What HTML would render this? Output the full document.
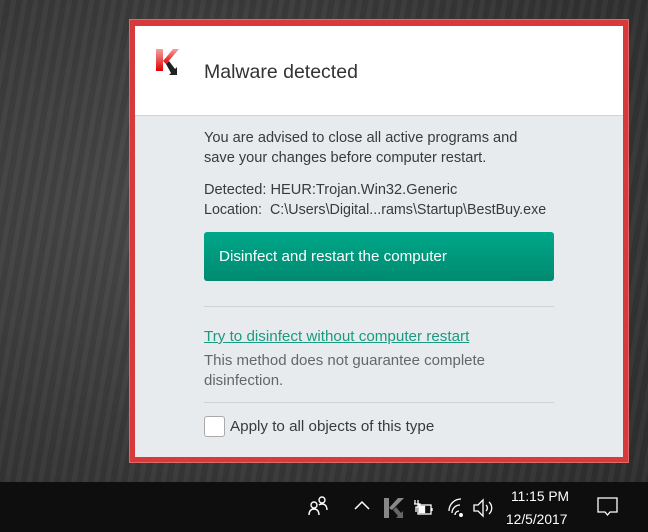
<!DOCTYPE html>
<html><head><style>
*{margin:0;padding:0;box-sizing:border-box}
body{width:648px;height:532px;overflow:hidden;position:relative;font-family:"Liberation Sans",sans-serif;
background:radial-gradient(ellipse at 30% 40%,#4a4a4a,#363636 60%,#2c2c2c);}
.t{position:absolute;white-space:nowrap;font-size:14.6px;color:#3a3a3a;line-height:20px}
</style></head><body>
<div style="position:absolute;left:0;top:0;width:648px;height:482px;background:repeating-linear-gradient(100deg,rgba(255,255,255,.03) 0 5px,rgba(0,0,0,.04) 5px 11px)"></div>
<div style="position:absolute;left:129px;top:19px;width:500px;height:444px;background:#d83a3c;border:1px solid #e06a6a"></div>
<div style="position:absolute;left:135px;top:26px;width:488px;height:89px;background:#fff"></div>
<div style="position:absolute;left:135px;top:115px;width:488px;height:342px;background:#e7ebee;border-top:1px solid #d0d4d8"></div>
<svg style="position:absolute;left:155px;top:47px" width="32" height="32" viewBox="0 0 32 32">
<defs><linearGradient id="r" x1="0" y1="0" x2="0" y2="1"><stop offset="0" stop-color="#f6a0a0"/><stop offset="1" stop-color="#e00000"/></linearGradient></defs>
<path d="M1 2h7v22H1z" fill="url(#r)"/><path d="M8 14L18 2h6L11 17z" fill="url(#r)"/><path d="M11 17l3-3 6 8 2-2v8h-8l2-2z" fill="#222"/></svg>
<div class="t" style="left:204px;top:60px;font-size:19.5px;color:#333;line-height:24px">Malware detected</div>
<div class="t" style="left:204px;top:128px">You are advised to close all active programs and</div>
<div class="t" style="left:204px;top:148px">save your changes before computer restart.</div>
<div class="t" style="left:204px;top:180px">Detected: HEUR:Trojan.Win32.Generic</div>
<div class="t" style="left:204px;top:200px;font-size:14.3px">Location:&nbsp; C:\Users\Digital...rams\Startup\BestBuy.exe</div>
<div style="position:absolute;left:204px;top:232px;width:350px;height:49px;border-radius:3px;background:linear-gradient(#00a78a,#008a70)"></div>
<div class="t" style="left:219px;top:247px;color:#fff;font-size:15.2px">Disinfect and restart the computer</div>
<div style="position:absolute;left:204px;top:306px;width:350px;height:1px;background:#cdd2d6"></div>
<div class="t" style="left:204px;top:327px;color:#1a9a80;text-decoration:underline;font-size:15.2px">Try to disinfect without computer restart</div>
<div class="t" style="left:204px;top:351px;color:#666;font-size:15px">This method does not guarantee complete</div>
<div class="t" style="left:204px;top:371px;color:#666;font-size:15px">disinfection.</div>
<div style="position:absolute;left:204px;top:402px;width:350px;height:1px;background:#cdd2d6"></div>
<div style="position:absolute;left:204px;top:416px;width:21px;height:21px;background:#fff;border:1px solid #aaa;border-radius:3px"></div>
<div class="t" style="left:230px;top:417px;font-size:15.2px">Apply to all objects of this type</div>
<div style="position:absolute;left:0;top:482px;width:648px;height:50px;background:#0e0e0e"></div>
<svg style="position:absolute;left:305px;top:495px" width="30" height="24" viewBox="0 0 30 24" fill="none" stroke="#fff" stroke-width="1.4">
<circle cx="9" cy="10" r="3"/><path d="M4 20c0-4 2-6 5-6s5 2 5 6"/><circle cx="17" cy="5" r="3"/><path d="M14 10c1-1 2-1 3-1 3 0 5 2 5 6"/></svg>
<svg style="position:absolute;left:352px;top:498px" width="20" height="14" viewBox="0 0 20 14" fill="none" stroke="#fff" stroke-width="1.5"><path d="M3 11l7-7 7 7"/></svg>
<svg style="position:absolute;left:383px;top:497px" width="22" height="22" viewBox="0 0 22 22"><path d="M1 1h5v20H1z" fill="#888"/><path d="M6 11L15 1h6L9 13z" fill="#888"/><path d="M10 13l3-3 5 6 2-2v7h-7l2-2z" fill="#666"/></svg>
<svg style="position:absolute;left:413px;top:498px" width="24" height="18" viewBox="0 0 24 18" fill="none" stroke="#fff" stroke-width="1.3"><path d="M2 2v4M5 2v4M1 6h6v3H3v5"/><rect x="5" y="7" width="13" height="9"/><rect x="6.5" y="8.5" width="5" height="6" fill="#fff"/><path d="M19 10v3"/></svg>
<svg style="position:absolute;left:446px;top:497px" width="22" height="22" viewBox="0 0 22 22" fill="none" stroke="#fff" stroke-width="1.3"><path d="M3 14a12 12 0 0 1 12-12M6 16a8 8 0 0 1 8-8M9 18a4 4 0 0 1 4-4"/><circle cx="15" cy="18" r="1.3" fill="#fff"/></svg>
<svg style="position:absolute;left:472px;top:497px" width="22" height="22" viewBox="0 0 22 22" fill="none" stroke="#fff" stroke-width="1.3"><path d="M2 8h4l5-5v16l-5-5H2z"/><path d="M14 8a4 4 0 0 1 0 6M17 5a8 8 0 0 1 0 12"/></svg>
<div class="t" style="left:511px;top:487px;color:#fff;font-size:13.8px">11:15 PM</div>
<div class="t" style="left:506px;top:510px;color:#fff;font-size:13.8px">12/5/2017</div>
<svg style="position:absolute;left:596px;top:495px" width="24" height="24" viewBox="0 0 24 24" fill="none" stroke="#fff" stroke-width="1.3"><path d="M2 3h19v14h-7l-2.5 3-2.5-3H2z"/></svg>
</body></html>
